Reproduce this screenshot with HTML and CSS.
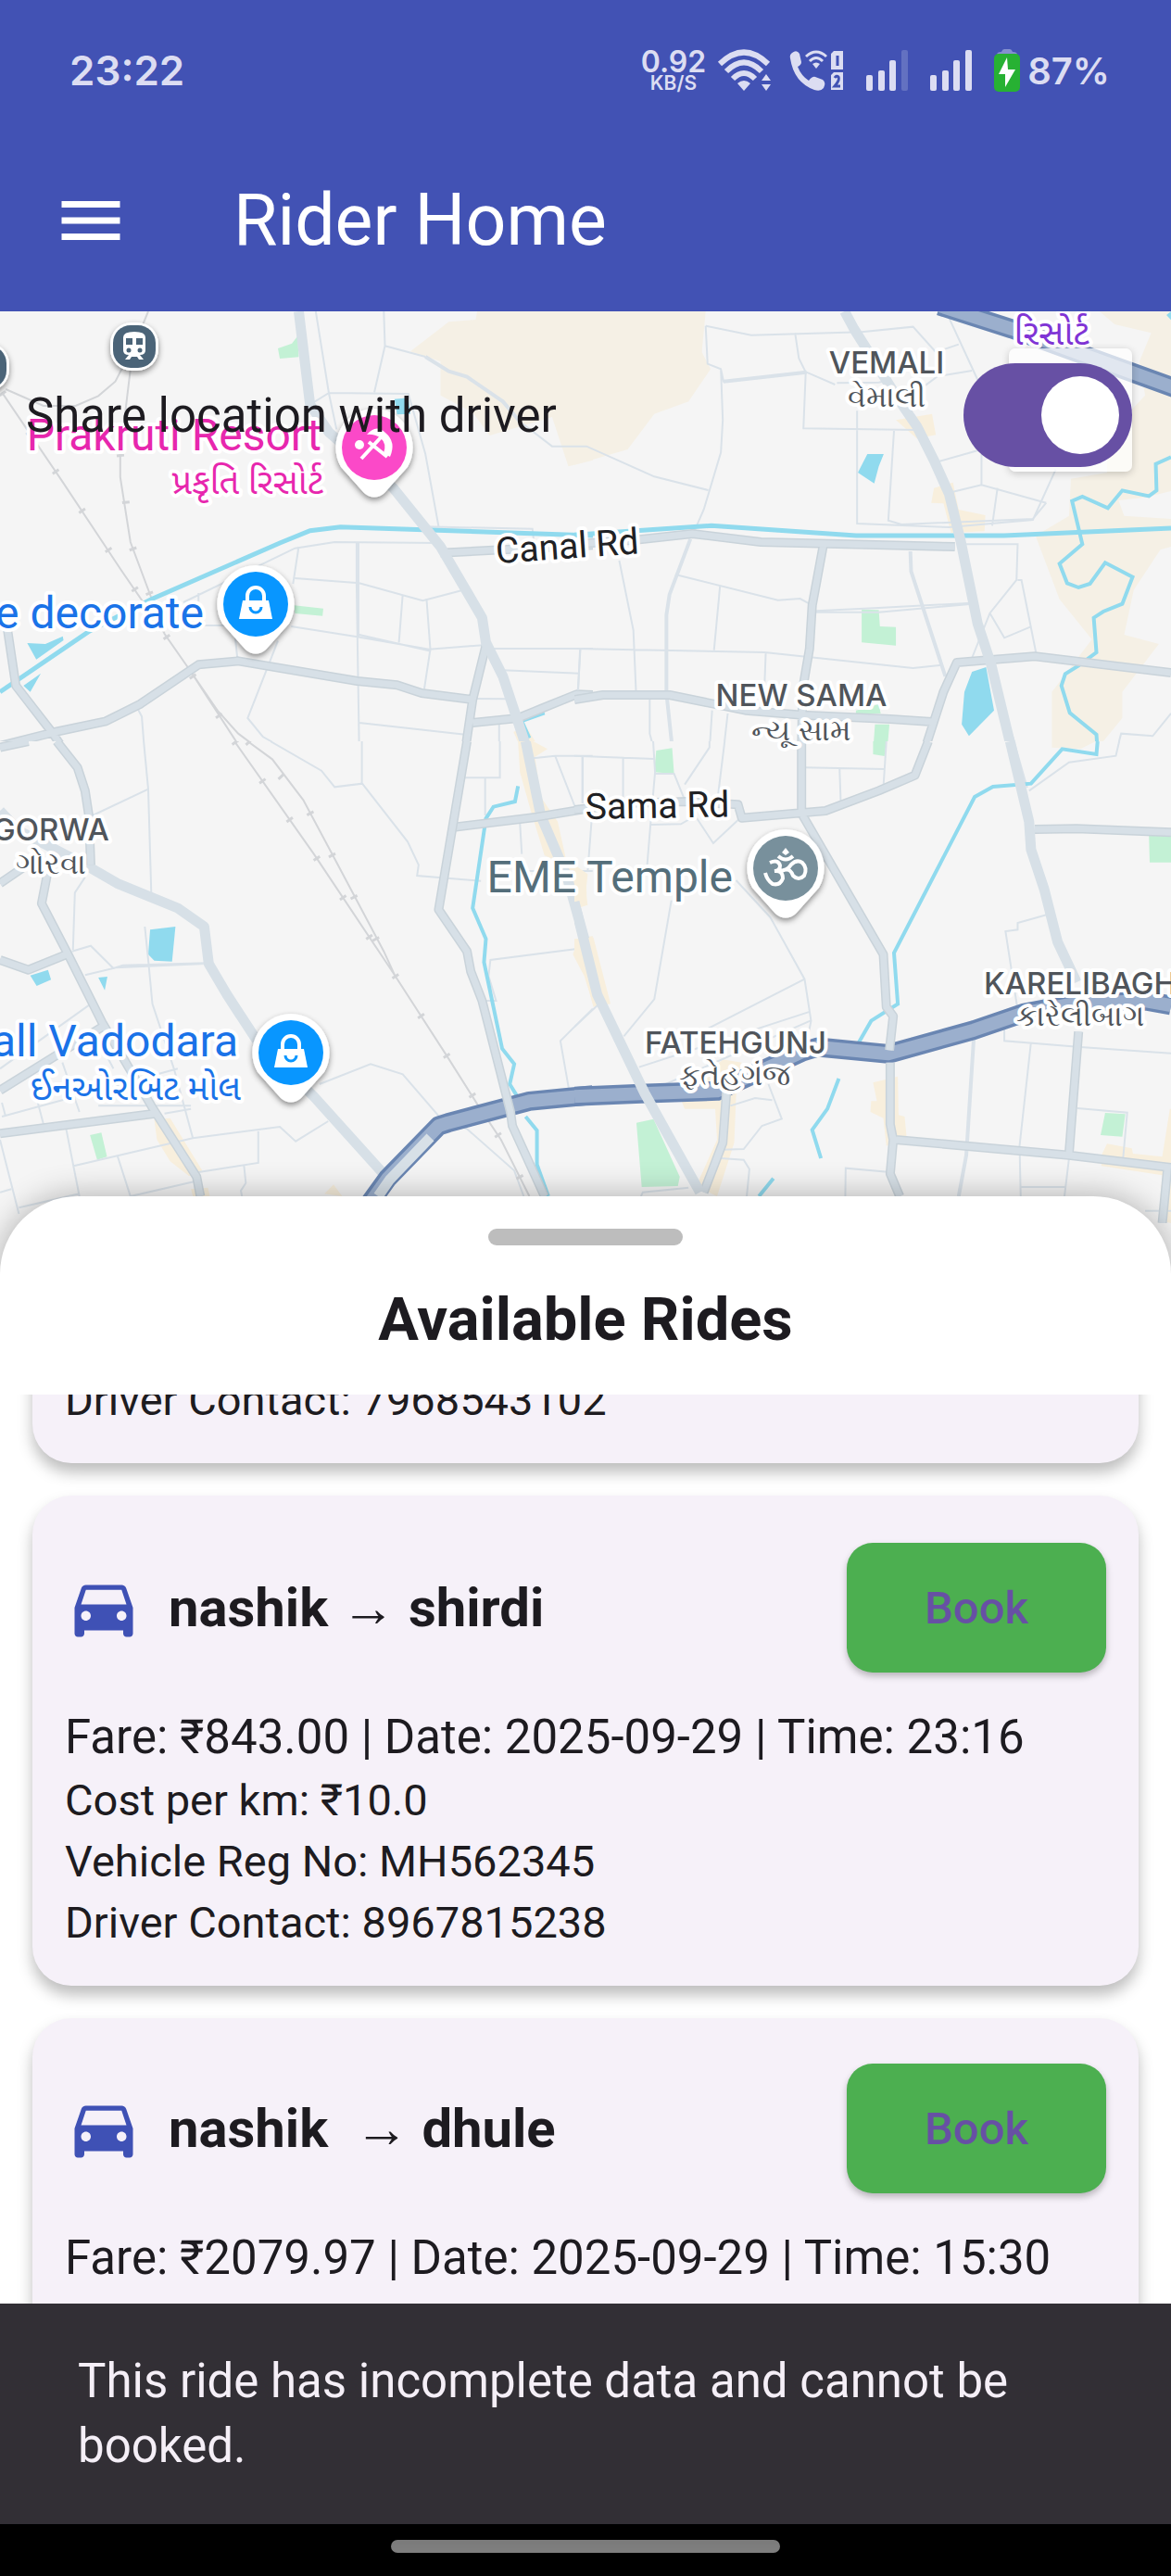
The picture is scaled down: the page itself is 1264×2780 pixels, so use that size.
FILE: index.html
```html
<!DOCTYPE html>
<html lang="en">
<head>
<meta charset="utf-8">
<meta name="viewport" content="width=device-width, initial-scale=1">
<title>Rider Home</title>
<link rel="stylesheet" href="styles.css">
</head>
<body>
<div class="screen">
  <header class="top">
    <div class="status">
      <time class="clock">23:22</time>
      <div class="rate"><span class="rate-value">0.92</span><span class="rate-unit">KB/S</span></div>
      <svg class="ic-wifi" viewBox="0 0 60 46" width="60" height="46" fill="none" stroke="#dcddf2" stroke-width="6">
        <path d="M3 16Q29-9 55 16M10 24Q29 5 48 24M17 32Q29 20 41 32"/>
        <path d="M22 37Q29 31 36 37L29 45ZM48 34l5-7 5 7ZM48 38l5 7 5-7Z" fill="#dcddf2" stroke="none"/>
      </svg>
      <svg class="ic-call" viewBox="0 0 60 46" width="60" height="46">
        <path d="M3 4Q8 0 11 5L13 14Q13 17 9 19Q13 29 21 34Q25 29 28 30L36 33Q40 36 37 42Q34 46 27 44Q5 36 1 10Q0 6 3 4Z" fill="#dcddf2"/>
        <path d="M18 8Q29-2 40 8M22 13Q29 6 36 13" fill="none" stroke="#dcddf2" stroke-width="3"/>
        <path d="M25 16Q29 13 33 16L29 21Z" fill="#dcddf2"/>
        <path d="M48 2H58V22H45V5ZM48 25H58V44H45V28Z" fill="#dcddf2"/>
        <path d="M52 7V18M49 31Q51 28 53 30Q55 33 49 40H55" fill="none" stroke="#4252b4" stroke-width="3"/>
      </svg>
      <svg class="ic-signal" viewBox="0 0 46 44" width="46" height="44" fill="#dcddf2">
        <rect y="27" width="7" height="17" rx="2"/><rect x="13" y="22" width="7" height="22" rx="2"/><rect x="25" y="11" width="7" height="33" rx="2"/><rect x="38" width="7" height="44" rx="2" opacity=".22"/>
      </svg>
      <svg class="ic-signal" viewBox="0 0 46 44" width="46" height="44" fill="#dcddf2">
        <rect y="27" width="7" height="17" rx="2"/><rect x="13" y="22" width="7" height="22" rx="2"/><rect x="25" y="11" width="7" height="33" rx="2"/><rect x="38" width="7" height="44" rx="2"/>
      </svg>
      <svg class="ic-battery" viewBox="0 0 28 46" width="28" height="46">
        <path d="M3 6Q3 3 8 3Q9 0 11 0H17Q19 0 20 3Q25 3 25 6Z" fill="#8490cf"/>
        <rect y="5" width="28" height="41" rx="5" fill="#27b133"/>
        <path d="M14 9L5 27H12V41L23 22H15Z" fill="#fff"/>
      </svg>
      <span class="charge">87%</span>
    </div>
    <nav class="appbar">
      <button class="menu" type="button" aria-label="Open menu">
        <svg viewBox="0 0 24 24" width="84" height="84" fill="#fff"><path d="M3 18h18v-2H3v2zm0-5h18v-2H3v2zm0-7v2h18V6H3z"/></svg>
      </button>
      <h1 class="title">Rider Home</h1>
    </nav>
  </header>

  <main class="stage">
    <div class="map">
      <svg class="map-art" viewBox="0 336 1264 1064" preserveAspectRatio="xMidYMin slice">
        <defs>
          <filter id="lift" x="-30%" y="-30%" width="160%" height="160%"><feDropShadow dx="0" dy="3" stdDeviation="3" flood-opacity=".45"/></filter>
          <path id="pin" d="M0-42A42 42 0 0 1 36 21L11 49Q0 58-11 49L-36 21A42 42 0 0 1 0-42Z" fill="#fff" filter="url(#lift)"/>
          <g id="shop">
            <use href="#pin"/><circle r="35" fill="#0896ff"/>
            <path d="M-14-4H14L18 16H-18Z" fill="#fff"/>
            <path d="M-9-4V-9A9 9 0 0 1 9-9V-4" fill="none" stroke="#fff" stroke-width="4"/>
            <path d="M-6 3A6 6 0 0 0 6 3" fill="none" stroke="#0896ff" stroke-width="3"/>
          </g>
          <g id="station">
            <rect x="-26" y="-26" width="52" height="52" rx="23" fill="#fff" filter="url(#lift)"/>
            <rect x="-23" y="-23" width="46" height="46" rx="19" fill="#4b6478"/>
            <path d="M-12-10Q-12-16 0-16Q12-16 12-10V4Q12 9 6 9L10 14H5L3 11H-3L-5 14H-10L-6 9Q-12 9-12 4Z" fill="#fff"/>
            <path d="M-9-9H-2V-2H-9ZM2-9H9V-2H2Z" fill="#4b6478"/><circle cx="-6" cy="4" r="2.500" fill="#4b6478"/><circle cx="6" cy="4" r="2.500" fill="#4b6478"/>
          </g>
        </defs>
        <rect y="336" width="1264" height="1064" fill="#f5f5f5"/>

        <!-- north-west tile -->
        <svg x="0" y="330" width="640" height="480" viewBox="0 0 1568 1440" preserveAspectRatio="none">
          <path class="sand" d="M1262 18L1258 45 1187 52 1085 148 1165 180V290L1250 345 1295 420 1460 360 1503 520 1568 500V18Z"/>
          <path class="town" d="M1358 1380L1390 1360 1420 1420 1448 1440H1380Z"/>
          <path class="park" d="M735 138L772 122 787 98 790 166 740 171ZM778 970L855 980 853 1004 780 996Z"/>
          <path class="lake" d="M1043 302L1080 298 1085 350 1050 352ZM72 1092L120 1095 166 1070 168 1083 96 1145ZM62 1230L108 1190 80 1250Z"/>
          <path class="lane" d="M835 18L870 285 890 400M1015 18L1018 130 990 280M1018 130L1125 165M820 320L870 282 1080 285 1125 480 1160 715M1120 715L1408 722 1412 765M485 960L780 785 885 765 1165 768M790 780L775 900M943 765V900L950 1440M780 882L950 898 1118 955 1225 920M770 1038L945 1072 1135 1112 1285 1098M1065 935L1055 1090M1128 948L1138 1112 1122 1240M1285 1110H1568M1330 1180L1532 1190M1535 1110L1528 1250M950 1350L1230 1388M735 1085L655 1335 695 1395 760 1440M360 1295L375 1330 382 1440M620 1050L628 1145M1250 1272L1340 1273M1320 1350V1440M525 930V1035H600M1375 375L1460 455 1550 455 1568 462M950 1065L1140 1118M948 765V1070"/>
          <path class="lane wide" d="M1125 165L1187 212 1235 230 1330 310 1375 375"/>
          <g class="rails"><path d="M392 18L378 60M322 205L305 245 260 292 200 324 115 324 15 270M345 205L318 480 318 555 345 765 400 945 435 1062 505 1185 550 1270 640 1440M5 280L160 560 320 855 435 1060M505 1185L575 1310 630 1385 690 1440"/><path class="ties" d="M318 480L345 765 435 1062 640 1440M5 280L160 560 435 1060"/></g>
          <path class="stream" d="M0 1250L238 1052 400 950 740 768 820 728 900 716 1568 744"/>
          <path class="stream thin" d="M1378 1345L1440 1318M1378 1340L1400 1400"/>
          <g class="street"><path d="M0 1425L145 1380 280 1345 370 1290 525 1162 630 1150 945 1215 1050 1228 1115 1254 1250 1275M20 1050L42 1230 140 1385 170 1440M1285 1100L1250 1275 1230 1440M1250 1350L1370 1335 1430 1305 1525 1258 1568 1260M1165 800L1568 775"/><path class="fill" d="M0 1425L145 1380 280 1345 370 1290 525 1162 630 1150 945 1215 1050 1228 1115 1254 1250 1275M20 1050L42 1230 140 1385 170 1440M1285 1100L1250 1275 1230 1440M1250 1350L1370 1335 1430 1305 1525 1258 1568 1260M1165 800L1568 775"/></g>
          <path class="avenue" d="M790 18L820 320 870 410 1040 590 1165 780 1275 1010 1285 1090 1330 1200 1395 1440"/>
        </svg>

        <!-- north-east tile -->
        <svg x="620" y="330" width="644" height="480" viewBox="0 0 1568 1440" preserveAspectRatio="none">
          <path class="sand" d="M345 18L335 150 358 205 300 310 210 350 140 465 0 515V18ZM1380 18L1420 60 1516 88 1485 180 1500 290 1400 420 1400 540 1305 560 1300 680 1212 745 1275 950 1360 1080 1255 1250V1440H1370L1440 1335V1250L1536 1095 1445 1065 1470 920 1540 790 1568 780V690L1445 680 1430 630 1500 620 1568 600V18Z"/>
          <path class="town" d="M845 370L940 350 950 418 900 430ZM945 590L995 572 1010 660 1080 678 1078 730 990 735 970 640 938 638Z"/>
          <path class="park" d="M755 983L800 985 803 1038 845 1040V1100L755 1090ZM790 1355H828L822 1440H785ZM740 1310L800 1290 805 1320H740ZM230 1440L255 1432V1440Z"/>
          <path class="lake" d="M770 480H813L800 520 788 575 745 540ZM1045 1185L1082 1170 1103 1310 1037 1393 1018 1355 1025 1250ZM1568 18L1556 30 1568 46ZM1275 1435L1315 1432V1440H1275Z"/>
          <path class="lane" d="M345 65L465 95 755 85 890 68 950 150 1010 125M345 65L350 188 385 205 392 245 610 215 685 255M385 205L390 370 385 475 340 660 315 730M0 455L32 455 210 553 352 597M580 88L590 170 608 215 602 397 900 402M743 340V705L985 717 1205 693 1265 530M840 405L825 695 860 708 1205 690 1240 638M985 605L1070 580 1240 638M1070 480V580M955 505L1070 465M1112 590L1098 712M690 250L800 248 830 240M920 260L955 228 1045 210M985 40L1060 240M118 825L155 1050 162 1250M265 870L535 953 593 948 618 965M383 905L367 1115M0 1110L500 1122 890 1173 965 1163M503 1122L500 1220M635 988L800 978 1045 962M635 992H800L1045 965M1015 772H1165L1162 888 1092 995 1045 1140M1165 888H1175L1213 1122M1092 995L1130 1075 1198 1040M15 1110L10 1245M198 1270V1385L210 1440M362 1310L355 1440M403 1320L392 1440M1568 1320L1520 1393 1437 1385 1425 1440M1130 1320L1165 1440M715 1360L710 1440"/>
          <path class="lane wide" d="M305 755L250 935 242 1000V1255L258 1440M883 795L885 860 975 1200M392 245L610 215"/>
          <path class="stream thin" d="M1568 490L1528 512 1530 598 1510 616 1440 598 1402 655 1335 618 1308 632 1335 772 1275 835 1295 898 1325 912 1355 900 1395 832 1467 878 1440 965 1390 990 1365 1010 1372 1122 1325 1165 1290 1192 1280 1230 1302 1318 1372 1388 1375 1440"/>
          <path class="stream" d="M0 742L360 712 740 744H1130L1568 720"/>
          <g class="street"><path d="M0 772L160 758 310 738 490 765 1000 780M655 770L625 970 618 1110 600 1240 597 1440M0 1275L75 1260H250L450 1310 600 1325 830 1338 940 1347M1568 1188L1210 1135 1005 1155 970 1250 945 1345 920 1440"/><path class="fill" d="M0 772L160 758 310 738 490 765 1000 780M655 770L625 970 618 1110 600 1240 597 1440M0 1275L75 1260H250L450 1310 600 1325 830 1338 940 1347M1568 1188L1210 1135 1005 1155 970 1250 945 1345 920 1440"/></g>
          <path class="avenue" d="M710 18L735 75 850 300 900 390 945 500 985 610 1015 760 1060 1030 1095 1160 1150 1440"/>
          <g class="highway"><path d="M960 0L1150 75 1600 276"/><path class="fill" d="M960 0L1150 75 1600 276"/></g>
        </svg>

        <!-- south-west tile -->
        <svg x="0" y="800" width="640" height="520" viewBox="0 0 1568 1560" preserveAspectRatio="none">
          <rect width="1568" height="1560" fill="#f5f5f5"/>
          <path class="town" d="M408 1225L450 1220 535 1390 500 1408 450 1360 415 1290ZM505 1450L550 1445 555 1473H510ZM858 1465L882 1435 905 1473ZM1370 0H1410L1448 25 1415 50 1430 180 1475 260 1500 400 1550 430 1552 530 1530 540 1480 390 1440 370 1405 230 1375 100ZM1530 640L1568 630V850L1545 760 1515 690Z"/>
          <path class="park" d="M238 1275L268 1267 283 1345 257 1355Z"/>
          <path class="lake" d="M397 610L464 600 455 713 408 710 392 690ZM80 758L127 740 135 772 97 792ZM260 765L284 762 277 806Z"/>
          <path class="lane" d="M380 0L392 155 400 490M392 155L245 240M225 440L198 490 193 675M383 600L393 720 403 850 460 1060 510 1285M190 680L240 662 300 735 225 757M300 735L325 725 545 718M715 0L850 95 885 148 958 137 1078 325 1107 400 1103 435 1272 452M957 0V137M1230 118H1322V0M1283 120V240M845 1110L980 1045 1065 1078 1165 1220 1235 1255 1360 1390 1385 1473M195 1375L510 1285 740 1248 782 1295 868 1230M175 1255L210 1473M310 1340L345 1473 515 1425M525 1395L683 1365V1262M645 1370L650 1430 637 1455 640 1473M0 1290L50 1530M0 1460L30 1450M50 1510L210 1465M240 850L0 1060M5 1215L470 1060M165 1040L210 1200M260 1180H505M435 1205L505 1190M1540 670L1297 708 1292 760 1312 840H1280M1568 865L1482 970 1505 1130M1410 55L1468 47H1568M1468 47L1520 210M1375 265L1380 365M1540 47V200M1390 420H1568M5 1170L15 1215M100 1170L115 1240M270 990L300 1060M305 733L545 720"/>
          <path class="stream thin" d="M1370 145L1362 195 1305 212 1285 250 1250 540 1285 640 1280 715 1328 995 1360 1045 1348 1110 1367 1148M1390 1215L1420 1260V1370L1450 1473"/>
          <g class="rails"><path d="M620 0L830 365 1040 750 1185 1025 1265 1180 1325 1290 1400 1473M655 0L720 58 802 190 885 380 1015 680 1045 760"/><path class="ties" d="M620 0L830 365 1040 750 1185 1025 1325 1290 1400 1473M655 0L802 190 1045 760"/></g>
          <path class="avenue" d="M0 225L50 290 130 340 240 410 310 460 470 540 540 600 552 720 600 820 680 970 830 1150 1025 1415M1390 0L1430 240 1500 440 1568 740"/>
          <g class="street"><path d="M0 20L75 0M150 0L205 85 225 160 235 240 240 400M125 430L110 525 180 690 270 910 400 1180 520 1410 530 1473M0 708L75 740 180 688M0 460L60 410M0 1130L270 925M0 1270L410 1205M1200 278L1420 245 1568 215"/><path class="fill" d="M0 20L75 0M150 0L205 85 225 160 235 240 240 400M125 430L110 525 180 690 270 910 400 1180 520 1410 530 1473M0 708L75 740 180 688M0 460L60 410M0 1130L270 925M0 1270L410 1205M1200 278L1420 245 1568 215"/></g>
          <g class="highway"><path d="M975 1500L1025 1415 1160 1245 1185 1235 1400 1165 1568 1145"/><path class="fill" d="M975 1500L1025 1415 1160 1245 1185 1235 1400 1165 1568 1145"/></g>
          <path class="avenue" d="M1000 1473L1030 1420 1138 1282"/>
          <g class="street"><path d="M1235 0L1160 545 1235 680 1245 745 1275 840 1350 1200 1355 1245 1440 1473"/><path class="fill" d="M1235 0L1160 545 1235 680 1245 745 1275 840 1350 1200 1355 1245 1440 1473"/></g>
        </svg>

        <!-- south-east tile -->
        <svg x="620" y="800" width="644" height="520" viewBox="0 0 1568 1560" preserveAspectRatio="none">
          <rect x="48" width="1520" height="1560" fill="#f5f5f5"/>
          <path class="sand" d="M1255 0H1370L1330 25 1255 20Z"/>
          <path class="town" d="M0 400L35 430 30 490 35 530 0 540ZM0 640L50 635 95 850 50 860 20 720 0 690ZM280 1160L390 1030 440 1040 425 1150 420 1300 375 1473 320 1440 375 1290 370 1190 290 1190ZM785 1105L850 1085 852 1210 868 1215 873 1280 820 1310 812 1220 778 1200 780 1165 795 1165ZM1385 1340L1400 1303 1465 1318 1468 1335 1545 1345 1565 1190H1568V1560L1535 1550 1545 1405 1385 1375Z"/>
          <path class="park" d="M215 30L257 22 262 105 210 100ZM785 0H820L815 48 785 42ZM1510 305H1568V392H1512ZM163 1235L208 1223 277 1410 272 1440 177 1443ZM1395 1203L1448 1207 1440 1280 1383 1275Z"/>
          <path class="lane" d="M0 47L210 57M22 47V200M128 50V200M207 0L212 100 200 270 190 420M212 105H262L290 190 365 330 430 255M355 0V20L290 140M395 0L378 170M45 260L35 420M200 270L280 268 320 240M255 515L210 835 130 955M425 450L515 570 605 770 622 905 610 980M605 770L320 950M620 875L170 1055M620 905L230 1115M605 85L815 90M697 90L700 195M820 0L812 150M1432 0L1423 47 1300 68 1195 160M1155 0L1190 150M1245 560L1165 588V610L1133 615 1165 870M1130 920V970L1330 990 1568 1010M1200 975L1170 1310 1173 1473M1322 1188L1453 1202 1442 1350M1300 1350L1288 1473M1173 1443H1290M712 1473L713 1382 830 1395M0 925L65 850M510 1110L545 1222 493 1245 445 1320 388 1322M385 1350L445 1355 460 1385 453 1473M410 1180L475 1155 520 1162M175 1473L180 1460 300 1445M1568 1520H1500"/>
          <path class="lane wide" d="M1050 955L1030 1340 1010 1473"/>
          <path class="stream thin" d="M1375 0L1372 42 1282 25 1200 137 1100 147 1052 180 840 685 850 850 780 905 745 980M695 1092L665 1190 625 1258 648 1350M523 1415L485 1473"/>
          <g class="highway"><path d="M0 1150L190 1140 375 1132 600 1005 640 990 825 1012 1050 935 1180 880 1310 850 1500 840 1568 855"/><path class="fill" d="M0 1150L190 1140 375 1132 600 1005 640 990 825 1012 1050 935 1180 880 1310 850 1500 840 1568 855"/></g>
          <g class="street"><path d="M597 0V235M0 222L150 200 300 195 430 205 440 248 660 225 800 160 895 110 930 0M600 240L812 690 820 860 838 890 828 1000M830 1040V1240L838 1290 830 1400 855 1473M1210 285L1320 283 1568 295M1325 940L1300 1335M845 1290L1300 1340 1568 1380M400 1130L390 1300 340 1460M1560 1370L1545 1560"/><path class="fill" d="M597 0V235M0 222L150 200 300 195 430 205 440 248 660 225 800 160 895 110 930 0M600 240L812 690 820 860 838 890 828 1000M830 1040V1240L838 1290 830 1400 855 1473M1210 285L1320 283 1568 295M1325 940L1300 1335M845 1290L1300 1340 1568 1380M400 1130L390 1300 340 1460M1560 1370L1545 1560"/></g>
          <path class="avenue" d="M1145 0L1195 260 1200 350 1235 480 1270 650 1320 780M0 520L60 820 185 1140 330 1460"/>
        </svg>

        <g class="poi">
          <text class="resort" x="347" y="486" text-anchor="end">Prakruti Resort</text>
          <text class="resort gu" x="349" y="533" text-anchor="end">પ્રકૃતિ રિસોર્ટ</text>
          <text class="shop" x="220" y="678" text-anchor="end">e decorate</text>
          <text class="shop" x="257" y="1140" text-anchor="end">all Vadodara</text>
          <text class="shop gu" x="260" y="1187" text-anchor="end">ઈનઓરબિટ મોલ</text>
          <text class="temple" x="791" y="963" text-anchor="end">EME Temple</text>
          <text class="hotel gu" x="1135" y="372" text-anchor="middle">રિસોર્ટ</text>
        </g>
        <g class="area">
          <text x="957" y="403">VEMALI</text><text class="gu" x="957" y="439">વેમાલી</text>
          <text x="865" y="762">NEW SAMA</text><text class="gu" x="865" y="799">ન્યૂ સામ</text>
          <text x="55" y="907">GORWA</text><text class="gu" x="55" y="943">ગોરવા</text>
          <text x="794" y="1137">FATEHGUNJ</text><text class="gu" x="793" y="1171">ફતેહગંજ</text>
          <text x="1166" y="1073">KARELIBAGH</text><text class="gu" x="1166" y="1107">કારેલીબાગ</text>
        </g>
        <g class="road-name">
          <text x="536" y="608" transform="rotate(-4 536 608)">Canal Rd</text>
          <text x="632" y="884" transform="rotate(-1 632 884)">Sama Rd</text>
        </g>

        <use href="#station" x="145" y="374"/>
        <use href="#station" x="-16" y="396"/>
        <use href="#shop" x="276" y="652"/>
        <use href="#shop" x="314" y="1136"/>
        <g transform="translate(404 483)">
          <use href="#pin"/><circle r="35" fill="#fb49c8"/>
          <circle cx="-16" cy="-3" r="5" fill="#fff"/>
          <path d="M-14 12L8-12M-6-6L14 10" stroke="#fff" stroke-width="4" fill="none"/>
          <path d="M-8-14Q2-26 12-16Q24-6 17 10L10 6Q14-4 7-10Q0-15-8-14Z" fill="#fff"/>
        </g>
        <g transform="translate(848 937)">
          <use href="#pin"/><circle r="35" fill="#78909c"/>
          <path d="M-17-6Q-8-10-6-3Q-6 3-12 3Q-3 2-3 11Q-6 19-14 17Q-20 13-22 5M-8 3Q2 3 6-4Q12-10 18-6Q24 0 20 8Q14 14 8 8Q5 0 0 2M-8-13Q0-6 8-13" fill="none" stroke="#fff" stroke-width="4"/>
          <path d="M0-22L4-17L0-14L-4-17Z" fill="#fff"/>
        </g>
      </svg>
      <button class="locate" type="button" aria-label="My location"></button>
    </div>
    <div class="share">
      <label for="share">Share location with driver</label>
      <input id="share" class="switch" type="checkbox" role="switch" checked>
    </div>

    <section class="sheet">
      <div class="sheet-head">
        <span class="handle"></span>
        <h2>Available Rides</h2>
      </div>
      <div class="rides">
        <article class="card">
          <p class="detail">Driver Contact: 7968543102</p>
        </article>
        <article class="card">
          <div class="card-head">
            <svg class="car" viewBox="0 0 24 24" width="84" height="84"><path d="M18.920 6.010C18.720 5.420 18.160 5 17.500 5h-11c-.66 0-1.210.42-1.420 1.010L3 12v8c0 .55.45 1 1 1h1c.55 0 1-.45 1-1v-1h12v1c0 .55.45 1 1 1h1c.55 0 1-.45 1-1v-8l-2.080-5.990zM6.500 16c-.83 0-1.500-.67-1.500-1.500S5.670 13 6.500 13s1.500.67 1.500 1.500S7.330 16 6.500 16zm11 0c-.83 0-1.500-.67-1.500-1.500s.67-1.500 1.500-1.500 1.500.67 1.500 1.500-.67 1.500-1.500 1.500zM5 11l1.500-4.500h11L19 11H5z"/></svg>
            <h3>nashik → shirdi</h3>
            <button class="book" type="button">Book</button>
          </div>
          <p class="fare">Fare: ₹843.00 | Date: 2025-09-29 | Time: 23:16</p>
          <p class="detail">Cost per km: ₹10.0</p>
          <p class="detail">Vehicle Reg No: MH562345</p>
          <p class="detail">Driver Contact: 8967815238</p>
        </article>
        <article class="card open">
          <div class="card-head">
            <svg class="car" viewBox="0 0 24 24" width="84" height="84"><path d="M18.920 6.010C18.720 5.420 18.160 5 17.500 5h-11c-.66 0-1.210.42-1.420 1.010L3 12v8c0 .55.45 1 1 1h1c.55 0 1-.45 1-1v-1h12v1c0 .55.45 1 1 1h1c.55 0 1-.45 1-1v-8l-2.080-5.990zM6.500 16c-.83 0-1.500-.67-1.500-1.500S5.670 13 6.500 13s1.500.67 1.500 1.500S7.330 16 6.500 16zm11 0c-.83 0-1.500-.67-1.500-1.500s.67-1.500 1.500-1.500 1.500.67 1.500 1.500-.67 1.500-1.500 1.500zM5 11l1.500-4.500h11L19 11H5z"/></svg>
            <h3>nashik&nbsp; → dhule</h3>
            <button class="book" type="button">Book</button>
          </div>
          <p class="fare">Fare: ₹2079.97 | Date: 2025-09-29 | Time: 15:30</p>
        </article>
      </div>
    </section>
    <p class="snackbar" role="status">This ride has incomplete data and cannot be booked.</p>
  </main>
  <footer class="gesture"><span></span></footer>
</div>
</body>
</html>
```
FILE: styles.css
```css
* { box-sizing: border-box; }
body { margin: 0; font-family: Roboto, "Liberation Sans", sans-serif; color: #1d1b20; background: #fff; }
h1, h2, h3, p { margin: 0; }
button { border: 0; padding: 0; font-family: inherit; }

.screen { display: flex; flex-direction: column; height: 100vh; overflow: hidden; }

/* status bar and app bar */
.top { background: #4252b4; color: #dcddf2; }
.status { display: flex; align-items: center; height: 140px; padding: 12px 66px 0 75px; font-family: Inter, sans-serif; font-weight: 600; }
.clock { margin-right: auto; font-size: 44px; }
.rate { display: flex; flex-direction: column; align-items: center; }
.rate-value { font-size: 32px; line-height: 28px; }
.rate-unit { font-size: 21px; line-height: 18px; }
.ic-wifi { margin-left: 12px; }
.ic-call { margin-left: 18px; }
.ic-signal { margin-left: 23px; }
.ic-battery { margin-left: 23px; }
.charge { margin-left: 8px; font-size: 40px; }
.appbar { display: flex; align-items: center; height: 196px; }
.menu { display: flex; justify-content: center; width: 196px; background: none; }
.title { margin-left: 56px; font-size: 77px; font-weight: 400; line-height: 98px; color: #fff; }

.stage { flex: 1; min-height: 0; display: grid; grid-template-rows: 2fr 3fr; grid-template-columns: 100%; position: relative; }
.stage > * { grid-column: 1; min-height: 0; }

/* map */
.map { grid-row: 1 / 3; position: relative; overflow: hidden; background: #f5f5f5; }
.map-art { display: block; width: 100%; }
.map-art path { vector-effect: non-scaling-stroke; }
.sand { fill: #f5f0e5; }
.town { fill: #f8efdd; }
.park { fill: #c3f1d5; }
.lake { fill: #90daee; }
.lane { fill: none; stroke: #dae2e9; stroke-width: 2; }
.lane.wide { stroke-width: 4; }
.stream { fill: none; stroke: #90daee; stroke-width: 5; }
.stream.thin { stroke-width: 4; }
.rails path { fill: none; stroke: #d3d5d8; stroke-width: 2; }
.rails .ties { stroke-width: 8; stroke-dasharray: 3 48; }
.street path { fill: none; stroke: #c9d3da; stroke-width: 10; stroke-linejoin: round; }
.street .fill { stroke: #d7e0e7; stroke-width: 7; }
.avenue { fill: none; stroke: #d7e0e7; stroke-width: 11; stroke-linejoin: round; }
.highway path { fill: none; stroke: #6a86b2; stroke-width: 21; stroke-linejoin: round; }
.highway .fill { stroke: #9bafcd; stroke-width: 14; }
.map-art text { paint-order: stroke; stroke: #fff; stroke-width: 8px; stroke-linejoin: round; font-family: Roboto, "Noto Sans Gujarati", "Noto Sans", sans-serif; }
.poi text { font-size: 48px; }
.poi .gu { font-size: 38px; }
.resort { fill: #e727ae; }
.shop { fill: #1a73e8; }
.temple { fill: #546e7a; }
.hotel { fill: #8034d5; }
.area text { font-size: 33px; font-family: Inter, sans-serif; font-weight: 500; fill: #50555b; text-anchor: middle; }
.area .gu { font-size: 32px; font-weight: 400; }
.road-name text { font-size: 39px; fill: #202124; }
.locate { position: absolute; top: 40px; right: 42px; width: 133px; height: 133px; border-radius: 7px; background: rgba(255, 255, 255, .7); box-shadow: 0 2px 8px rgba(0, 0, 0, .2); }

.share { grid-row: 1; align-self: start; z-index: 1; display: flex; justify-content: space-between; align-items: center; padding: 56px 42px 0 28px; font-size: 51px; }
.switch { appearance: none; flex: none; width: 182px; height: 112px; margin: 0; padding: 14px; border-radius: 56px; background: #6750a4; display: flex; justify-content: flex-end; }
.switch::before { content: ""; width: 84px; height: 84px; border-radius: 50%; background: #fff; }

/* rides sheet */
.sheet { grid-row: 2; z-index: 2; display: flex; flex-direction: column; background: #fff; border-radius: 84px 84px 0 0; box-shadow: 0 0 35px rgba(0, 0, 0, .3); overflow: hidden; }
.sheet-head { flex: none; display: flex; flex-direction: column; align-items: center; gap: 35px; padding: 35px 35px 36px; }
.handle { width: 210px; height: 18px; border-radius: 9px; background: #bdbdbd; }
.sheet h2 { font-size: 65px; line-height: 90px; font-weight: 700; }
.rides { flex: 1; min-height: 0; overflow: hidden; display: flex; flex-direction: column; justify-content: flex-end; gap: 35px; padding: 0 35px 17px; }
.card { flex: none; display: flex; flex-direction: column; justify-content: flex-end; min-height: 529px; padding: 49px 35px 35px; border-radius: 42px; background: #f6f1f9; box-shadow: 0 10px 16px rgba(0, 0, 0, .26); }
.card.open { justify-content: flex-start; }
.card-head { display: flex; align-items: center; gap: 28px; margin-bottom: 35px; }
.car { flex: none; fill: #3f51b5; }
.card h3 { flex: 1; font-size: 58px; line-height: 84px; font-weight: 700; }
.book { height: 140px; padding: 0 84px; border-radius: 28px; background: #4caf50; color: #6750a4; font-size: 49px; font-weight: 500; box-shadow: 0 4px 7px rgba(0, 0, 0, .25); }
.fare { font-size: 51px; line-height: 70px; }
.detail { font-size: 47px; line-height: 66px; }

.snackbar { position: absolute; left: 0; right: 0; bottom: 0; z-index: 3; padding: 49px 84px; background: #322f35; color: #f5eff7; font-size: 51px; line-height: 70px; }
.gesture { flex: none; display: flex; justify-content: center; align-items: center; height: 56px; padding-bottom: 8px; background: #000; }
.gesture span { width: 420px; height: 14px; border-radius: 7px; background: #808080; }
```
